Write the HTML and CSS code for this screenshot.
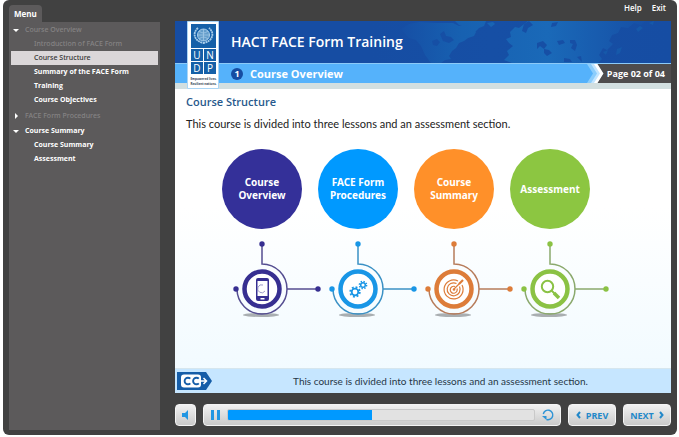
FILE: index.html
```html
<!DOCTYPE html>
<html lang="en">
<head>
<meta charset="utf-8">
<title>HACT FACE Form Training</title>
<link rel="stylesheet" href="styles.css">
</head>
<body>
<div class="player">
  <aside class="sidebar">
    <h2 class="tab">Menu</h2>
    <nav class="menu" aria-label="Menu">
      <ul>
        <li><a class="top open visited" href="#overview">Course Overview</a>
          <ul>
            <li><a class="visited" href="#intro">Introduction of FACE Form</a></li>
            <li><a class="current" href="#structure" aria-current="page">Course Structure</a></li>
            <li><a href="#face">Summary of the FACE Form Training</a></li>
            <li><a href="#objectives">Course Objectives</a></li>
          </ul>
        </li>
        <li><a class="top closed visited" href="#procedures">FACE Form Procedures</a></li>
        <li><a class="top open" href="#summary">Course Summary</a>
          <ul>
            <li><a href="#summary-page">Course Summary</a></li>
            <li><a href="#assessment">Assessment</a></li>
          </ul>
        </li>
      </ul>
    </nav>
  </aside>

  <div class="stage">
    <div class="links"><a href="#help">Help</a><a href="#exit">Exit</a></div>

    <main class="slide">
      <header class="banner">
        <svg class="map" viewBox="0 0 300 42" preserveAspectRatio="xMaxYMid slice" aria-hidden="true">
          <defs>
            <linearGradient id="sea"><stop offset="0" stop-color="#164da3"/><stop offset=".4" stop-color="#164fa5"/><stop offset="1" stop-color="#164da3"/></linearGradient>
            <linearGradient id="land" gradientUnits="userSpaceOnUse" x1="30" x2="275"><stop offset="0" stop-color="#164fa5"/><stop offset=".25" stop-color="#1761b1"/><stop offset=".6" stop-color="#1a69b8"/><stop offset="1" stop-color="#164fa5"/></linearGradient>
          </defs>
          <path fill="url(#sea)" d="M0 0h300v42H0z"/>
          <path fill="url(#land)" d="M30 8l8-5 10-2 18 1h16l6 3 7-2 5 4 5 4-2 4-6 2-4 3-5 2-3 5-4 3-3 5 2 3-6 1-4 3H60l-6-8-4-9-5-6-7-2z"/>
          <path fill="url(#land)" d="M84 0h31l-2 5-5 2-6 6-5-4-3-4-6-1zM116 2l6-1 2 2-4 3zM157 0h118l-5 4-7-2-6 5-7-1-3 6-6 2-3 6 4 3-6 6-4-2-4 7 3 4-4 4h-86l-8-3 5-5-2-4 6-5-4-3-3-4 5-2-1-5 5-5 4 1z"/>
          <path fill="#164fa5" d="M61 20l5-2 3 3-3 4-4-1zM69 13l4-3 2 5 5 1 3 3-5 3-6-2zM153 3l5-3 4 4-5 3-2 5-4-2zM166 22l6-2 4 4-3 4-4-3-3 3zM173 28l5 1 3 3-5 3-3-3zM186 20l6-1 2 3-6 2zM199 19h5l2 5-2 6-4-3 2-4-3-1zM181 2l6-1-2 4-5 1zM193 37l6 1 2 3h-8zM206 36l4-1 1 6z"/>
          <path fill="#1659aa" d="M265 8l4-3 3 2-5 4zM278 2l5-2-1 4zM246 28l5-2-2 6-4 2zM232 31l5-2-2 5z"/>
        </svg>
        <h1>HACT FACE Form Training</h1>
      </header>
      <div class="chapter">
        <span class="number">1</span>
        <h2>Course Overview</h2>
        <svg class="chevrons" viewBox="0 0 22 18" preserveAspectRatio="none" aria-hidden="true">
          <path fill="#55b2fb" d="M0 0h22v18H0z"/><path fill="#8bcdfc" d="M2 0h9l6 9-6 9H2l6-9z"/><path fill="#c2e5ff" d="M6 0h6l6 9-6 9H6l6-9z"/><path fill="#fff" d="M9 0h4l6 9-6 9H9l6-9z"/><path fill="#4e4c4d" d="M12.500 0h10v18h-10l6-9z"/>
        </svg>
        <span class="page">Page 02 of 04</span>
      </div>
      <svg class="logo" viewBox="0 0 32 68" role="img" aria-label="UNDP">
        <path fill="#fff" stroke="#a9d5f5" d="M.5.5h31v67H.5z"/>
        <path fill="#1560a8" d="M4 3h25v24H4zM4 28h12v12H4zM17 28h12v12H17zM4 41h12v12H4zM17 41h12v12H17z"/>
        <g fill="none" stroke="#a8cdea">
          <circle cx="16.500" cy="14" r="6" fill="#649dca"/>
          <path stroke-width=".7" d="M10.500 14h12M16.500 8v12M12 10q4.500 4 9 0M12 18q4.500-4 9 0"/>
          <path stroke-width="1.800" stroke-dasharray="2 .5" d="M11 7c-6 5-4 13 5.500 15C26 20 28 12 22 7"/>
        </g>
        <g class="logo-letters"><text x="10" y="37.500">U</text><text x="23" y="37.500">N</text><text x="10" y="50.500">D</text><text x="23" y="50.500">P</text></g>
        <g class="logo-motto"><text x="16.500" y="59">Empowered lives.</text><text x="16.500" y="63.500">Resilient nations.</text></g>
      </svg>

      <section class="content">
        <h3>Course Structure</h3>
        <p>This course is divided into three lessons and an assessment section.</p>
        <ol class="steps">
          <li class="step indigo">
            <span class="disc">Course<br>Overview</span>
            <svg viewBox="0 0 96 80" aria-hidden="true">
              <ellipse class="shadow" cx="47" cy="73" rx="18" ry="2"/>
              <path class="wire" d="M48 2v20a25 25 0 1 1-25 25M73 47h31"/>
              <circle class="dot" cx="48" cy="2" r="2.700"/><circle class="dot" cx="22" cy="47" r="2.700"/><circle class="dot" cx="104" cy="47" r="2.700"/>
              <circle class="ring" cx="48" cy="47" r="17.500"/>
              <rect class="dot" x="42" y="36" width="13" height="23" rx="2"/>
              <path fill="#fff" d="M43.500 39h10v15h-10zM46.500 56h4v1.500h-4z"/>
              <path fill="none" stroke="#8582bb" stroke-width=".8" d="M49 43a4 4 0 1 0 2 6"/>
            </svg>
          </li>
          <li class="step blue">
            <span class="disc">FACE Form<br>Procedures</span>
            <svg viewBox="0 0 96 80" aria-hidden="true">
              <ellipse class="shadow" cx="47" cy="73" rx="18" ry="2"/>
              <path class="wire" d="M48 2v20a25 25 0 1 1-25 25M73 47h31"/>
              <circle class="dot" cx="48" cy="2" r="2.700"/><circle class="dot" cx="22" cy="47" r="2.700"/><circle class="dot" cx="104" cy="47" r="2.700"/>
              <circle class="ring" cx="48" cy="47" r="17.500"/>
              <g class="line">
                <circle cx="45" cy="50" r="3.300" stroke-width="1.800"/><circle cx="45" cy="50" r="4.800" stroke-width="1.800" stroke-dasharray="1.900 1.870"/>
                <circle cx="53" cy="43" r="2.300" stroke-width="1.500"/><circle cx="53" cy="43" r="3.600" stroke-width="1.500" stroke-dasharray="1.400 1.427"/>
              </g>
            </svg>
          </li>
          <li class="step orange">
            <span class="disc">Course<br>Summary</span>
            <svg viewBox="0 0 96 80" aria-hidden="true">
              <ellipse class="shadow" cx="47" cy="73" rx="18" ry="2"/>
              <path class="wire" d="M48 2v20a25 25 0 1 1-25 25M73 47h31"/>
              <circle class="dot" cx="48" cy="2" r="2.700"/><circle class="dot" cx="22" cy="47" r="2.700"/><circle class="dot" cx="104" cy="47" r="2.700"/>
              <circle class="ring" cx="48" cy="47" r="17.500"/>
              <g class="line">
                <path d="M52 39a9.500 9.500 0 1 0 4 4M50.500 41.500a6.500 6.500 0 1 0 3 3M49 44.500a3.500 3.500 0 1 0 2 2"/>
                <path d="M48 47l6-6"/><path stroke-width="2.200" d="M53 42l4-4"/>
              </g>
              <circle class="dot" cx="48" cy="47.500" r="1.300"/>
            </svg>
          </li>
          <li class="step green">
            <span class="disc">Assessment</span>
            <svg viewBox="0 0 96 80" aria-hidden="true">
              <ellipse class="shadow" cx="47" cy="73" rx="18" ry="2"/>
              <path class="wire" d="M48 2v20a25 25 0 1 1-25 25M73 47h31"/>
              <circle class="dot" cx="48" cy="2" r="2.700"/><circle class="dot" cx="22" cy="47" r="2.700"/><circle class="dot" cx="104" cy="47" r="2.700"/>
              <circle class="ring" cx="48" cy="47" r="17.500"/>
              <g class="line"><circle cx="45.500" cy="44.500" r="5.700" stroke-width="2"/><path stroke-width="2" d="M49.500 48.500l3 3"/><path stroke-width="3.500" d="M52 51l5 5"/></g>
            </svg>
          </li>
        </ol>
      </section>

      <footer class="caption">
        <button class="cc" type="button" aria-label="Closed captions">
          <svg viewBox="0 0 35 18" aria-hidden="true">
            <path fill="#155da8" d="M0 0h29l6 9-6 9H0z"/><rect x="4" y="2.500" width="20" height="13" rx="3" fill="#fff"/>
            <path fill="none" stroke="#155da8" stroke-width="1.900" d="M13.300 6.700a3.300 3.300 0 1 0 0 4.600M21.800 6.700a3.300 3.300 0 1 0 0 4.600"/>
            <path fill="none" stroke="#fff" stroke-width="1.500" d="M23 9h6M26.500 6l3 3-3 3"/>
          </svg>
        </button>
        <p>This course is divided into three lessons and an assessment section.</p>
      </footer>
    </main>

    <div class="controls">
      <button class="btn sound" type="button" aria-label="Sound">
        <svg viewBox="0 0 8 10" width="8" height="10" aria-hidden="true"><path fill="#2196e3" d="M0 3h3l3-3v10L3 7H0z"/></svg>
      </button>
      <div class="btn seekbar">
        <button class="plain" type="button" aria-label="Pause">
          <svg viewBox="0 0 9 10" width="9" height="10" aria-hidden="true"><path fill="#2196e3" d="M0 0h3v10H0zM6 0h3v10H6z"/></svg>
        </button>
        <input class="seek" type="range" min="0" max="100" value="47" aria-label="Position">
        <button class="plain" type="button" aria-label="Replay">
          <svg viewBox="0 0 12 12" width="12" height="12" aria-hidden="true"><path fill="none" stroke="#2e94d6" stroke-width="1.400" d="M4.500 10.500A4.800 4.800 0 1 0 1.300 5"/><path fill="#2e94d6" d="M0 7h4.500v4z"/></svg>
        </button>
      </div>
      <button class="btn step-btn" type="button"><svg viewBox="0 0 5 8" width="5" height="8" aria-hidden="true"><path fill="none" stroke="#2388c9" stroke-width="2" d="M4 1L1.500 4 4 7"/></svg>PREV</button>
      <button class="btn step-btn" type="button">NEXT<svg viewBox="0 0 5 8" width="5" height="8" aria-hidden="true"><path fill="none" stroke="#2388c9" stroke-width="2" d="M1 1l2.500 3L1 7"/></svg></button>
    </div>
  </div>
</div>
</body>
</html>
```
FILE: styles.css
```css
* { box-sizing: border-box; }

body {
  margin: 0;
  background: #fff;
  font-family: "Open Sans", "Noto Sans", sans-serif;
  font-size: 11px;
  color: #222;
}

h1, h2, h3, p, ul, ol { margin: 0; padding: 0; }
ul, ol { list-style: none; }
a { color: inherit; text-decoration: none; }
button { font-family: inherit; cursor: pointer; }
svg { display: block; }

.player {
  display: flex;
  gap: 15px;
  min-height: calc(100vh - 2px);
  margin: 0 2px 2px 3px;
  padding: 0 6px 5px;
  background: #414141;
  border-radius: 6px;
}

/* Sidebar */
.sidebar {
  display: flex;
  flex-direction: column;
  flex: 0 0 151px;
  padding-top: 5px;
  color: #fff;
}

.tab {
  align-self: flex-start;
  padding: 0 5px;
  border-radius: 4px 4px 0 0;
  background: #5c5a5b;
  font-size: 8px;
  line-height: 17px;
}

.menu {
  flex: 1;
  padding: 0 2px;
  background: #5c5a5b;
  font-size: 7px;
  font-weight: 700;
  line-height: 14px;
}

.menu ul ul { padding-bottom: 1px; }
.menu a { display: block; padding: 0 20px 0 23px; }
.menu .top { position: relative; padding-left: 14px; line-height: 15px; }
.menu .visited, .menu .current { font-family: "Noto Sans", sans-serif; font-weight: 500; }
.menu .visited { color: #858384; }
.menu .current { background: #dbd7d9; color: #333; }

.menu .top::before {
  content: "";
  position: absolute;
  left: 2px;
  top: 7px;
  border: 3px solid transparent;
}
.menu .open::before { border-top-color: #fff; }
.menu .closed::before { left: 4px; top: 5px; border-left-color: #fff; }

/* Stage */
.stage {
  display: flex;
  flex-direction: column;
  flex: 1;
  min-width: 0;
}

.links {
  display: flex;
  justify-content: flex-end;
  gap: 10px;
  padding: 0 5px 5px;
  color: #fff;
  font-size: 8px;
  font-weight: 600;
  line-height: 16px;
}

.slide {
  position: relative;
  display: flex;
  flex-direction: column;
  flex: 1;
  background: linear-gradient(#fff 50%, #f0faff);
}

.banner {
  position: relative;
  padding-left: 56px;
  background: #164da3;
  color: #fff;
}
.banner h1 { position: relative; font-size: 14px; font-weight: 600; line-height: 42px; }
.map { position: absolute; right: 0; top: 0; width: 300px; height: 100%; }

.chapter {
  display: flex;
  align-items: center;
  height: 26px;
  padding-left: 56px;
  border-top: 1px solid #8ccaf8;
  border-bottom: 6px solid #d2dfe0;
  background: #55b2fb;
  color: #fff;
}
.number {
  width: 12px;
  border-radius: 50%;
  background: #164da3;
  font-size: 9px;
  font-weight: 700;
  line-height: 12px;
  text-align: center;
}
.chapter h2 { flex: 1; padding-left: 7px; font-size: 11px; line-height: 18px; }
.chevrons { width: 22px; height: 19px; }
.page { padding-right: 6px; background: #4e4c4d; font-size: 9px; font-weight: 700; line-height: 19px; }

.logo { position: absolute; left: 12px; top: 0; width: 32px; height: 68px; }
.logo-letters { fill: #fff; font-size: 10px; text-anchor: middle; }
.logo-motto { fill: #345; font-size: 3px; font-weight: 700; text-anchor: middle; }

.content { flex: 1; padding: 4px 0 10px; }
.content h3 { padding-left: 11px; color: #27598c; font-size: 11px; font-weight: 600; line-height: 18px; }
.content p { padding: 4px 0 0 11px; font-family: Lato, "Open Sans", sans-serif; font-size: 11px; line-height: 18px; }

/* Lesson steps */
.steps {
  display: grid;
  grid-template-columns: repeat(4, 1fr);
  padding: 16px 73px 0 39px;
}
.step { display: flex; flex-direction: column; align-items: center; gap: 13px; }
.step svg { width: 96px; height: 80px; overflow: visible; }
.disc {
  display: grid;
  place-content: center;
  width: 80px;
  height: 80px;
  border-radius: 50%;
  background: var(--disc);
  color: #fff;
  font-family: "Noto Sans", sans-serif;
  font-size: 10px;
  font-weight: 700;
  line-height: 13px;
  text-align: center;
}
.indigo { --disc: #343099; --tone: #372f91; --wire: #554e91; }
.blue { --disc: #0099ff; --tone: #1996e6; --wire: #3b91c5; }
.orange { --disc: #ff9029; --tone: #dd7c39; --wire: #b77c5b; }
.green { --disc: #8cc641; --tone: #8bc244; --wire: #8ba96d; }
.wire { fill: none; stroke: var(--wire); stroke-width: 1.500; }
.dot { fill: var(--tone); }
.ring { fill: #fff; stroke: var(--tone); stroke-width: 4.500; }
.line { fill: none; stroke: var(--tone); stroke-width: 1.200; }
.shadow { fill: #a9aeb1; }

/* Caption */
.caption {
  display: flex;
  align-items: center;
  height: 25px;
  padding: 0 2px;
  border-top: 1px solid #d6e6ee;
  background: #c6e6ff;
  color: #263746;
}
.caption p { flex: 1; font-family: Lato, "Open Sans", sans-serif; font-size: 10px; text-align: center; }
.cc { padding: 0; border: 0; background: none; }
.cc svg { width: 35px; height: 18px; }

/* Playback */
.controls { display: flex; gap: 7px; padding: 11px 0 4px; }
.btn {
  display: flex;
  align-items: center;
  justify-content: center;
  height: 22px;
  padding: 0;
  border: 1px solid #f4f4f4;
  border-radius: 4px;
  background: linear-gradient(#f1f1f1, #cacaca);
}
.sound { width: 21px; }
.seekbar { flex: 1; padding: 0 6px 0 7px; gap: 7px; }
.plain { flex: none; padding: 0; border: 0; background: none; }
.step-btn { gap: 5px; width: 48px; color: #2388c9; font-size: 9px; font-weight: 700; }

.seek {
  flex: 1;
  min-width: 0;
  height: 12px;
  margin: 0;
  appearance: none;
  overflow: hidden;
  border: 1px solid #c9c9c9;
  border-radius: 2px;
  background: linear-gradient(90deg, #0099ff 47%, #e2e2e2 47%);
}
.seek::-webkit-slider-thumb { appearance: none; width: 1px; height: 10px; background: transparent; }
```
